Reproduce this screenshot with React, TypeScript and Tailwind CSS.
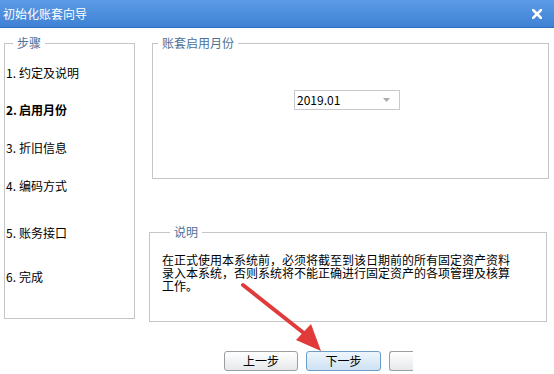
const steps = [
  { no: "1.", label: "约定及说明", mt: "mt-[16px]" },
  { no: "2.", label: "启用月份", mt: "mt-[23px]", active: true },
  { no: "3.", label: "折旧信息", mt: "mt-[24px]" },
  { no: "4.", label: "编码方式", mt: "mt-[24px]" },
  { no: "5.", label: "账务接口", mt: "mt-[33px]" },
  { no: "6.", label: "完成", mt: "mt-[30px]" },
];

const font = "font-['Noto_Sans_CJK_SC','Noto_Sans',sans-serif]";

export default function App() {
  return (
    <div
      className={`relative w-[554px] h-[374px] overflow-hidden bg-white text-[12px] text-black ${font}`}
    >
      {/* title bar */}
      <div className="flex h-[28px] items-center justify-between border-b border-[#2f6fc0] bg-gradient-to-b from-[#5c9be6] to-[#3e82d4] pl-[3px] pr-[12px]">
        <span className="text-[12px] leading-none text-white">初始化账套向导</span>
        <svg width="10" height="10" viewBox="0 0 10 10">
          <path d="M1 1 L9 9 M9 1 L1 9" stroke="white" strokeWidth="2.6" strokeLinecap="square" />
        </svg>
      </div>

      <div className="flex pt-[8px] pl-[4px]">
        {/* steps */}
        <fieldset className="h-[283px] w-[131px] border border-[#c3c5c8] pl-[1px]">
          <legend className="ml-[7px] px-[4px] leading-[14px] text-[#4c7199]">步骤</legend>
          {steps.map((s) => (
            <div
              key={s.no}
              className={`${s.mt} flex leading-[14px] ${s.active ? "font-bold" : ""}`}
            >
              <span className="inline-block w-[13px]">{s.no}</span>
              <span>{s.label}</span>
            </div>
          ))}
        </fieldset>

        <div className="flex flex-col">
          {/* month */}
          <fieldset className="ml-[17px] flex h-[143px] w-[397px] flex-col border border-[#c3c5c8]">
            <legend className="ml-[5px] px-[4px] leading-[14px] text-[#4c7199]">账套启用月份</legend>
            <div className="flex pt-[40px] pl-[141px]">
              <div className="flex h-[20px] w-[106px] items-center justify-between border border-[#c8cacc] bg-white pl-[2px] pr-[9px]">
                <span className="leading-none">2019.01</span>
                <svg width="7" height="4" viewBox="0 0 7 4">
                  <path d="M0 0 H7 L3.5 4 Z" fill="#a9adb2" />
                </svg>
              </div>
            </div>
          </fieldset>

          {/* note */}
          <fieldset className="mt-[46px] ml-[14px] h-[97px] w-[398px] border border-[#c3c5c8] pl-[12px]">
            <legend className="ml-[8px] px-[4px] leading-[14px] text-[#4c7199]">说明</legend>
            <p className="mt-[14px] leading-[13px]">
              <span className="block">在正式使用本系统前，必须将截至到该日期前的所有固定资产资料</span>
              <span className="block">录入本系统，否则系统将不能正确进行固定资产的各项管理及核算</span>
              <span className="block">工作。</span>
            </p>
          </fieldset>
        </div>
      </div>

      {/* buttons */}
      <div className="mt-[29px] flex pl-[224px]">
        <button className="flex h-[20px] w-[74px] items-center justify-center rounded-[3px] border border-[#9b9ea3] bg-gradient-to-b from-white to-[#e6e8eb] leading-none">
          上一步
        </button>
        <button className="ml-[8px] flex h-[20px] w-[75px] items-center justify-center rounded-[3px] border border-[#6e9cc8] bg-gradient-to-b from-[#eef6fd] to-[#cde2f4] leading-none">
          下一步
        </button>
        <div className="ml-[8px] h-[20px] w-[24px] rounded-l-[3px] border-y border-l border-[#9b9ea3] bg-gradient-to-b from-white to-[#e6e8eb]" />
      </div>

      {/* red annotation arrow */}
      <svg
        className="pointer-events-none absolute left-0 top-0"
        width="554"
        height="374"
        viewBox="0 0 554 374"
      >
        <path d="M243 285 L305 334" stroke="#e03a3a" strokeWidth="4" strokeLinecap="round" />
        <polygon points="321,351 296,340 311,324" fill="#e03a3a" />
      </svg>
    </div>
  );
}
